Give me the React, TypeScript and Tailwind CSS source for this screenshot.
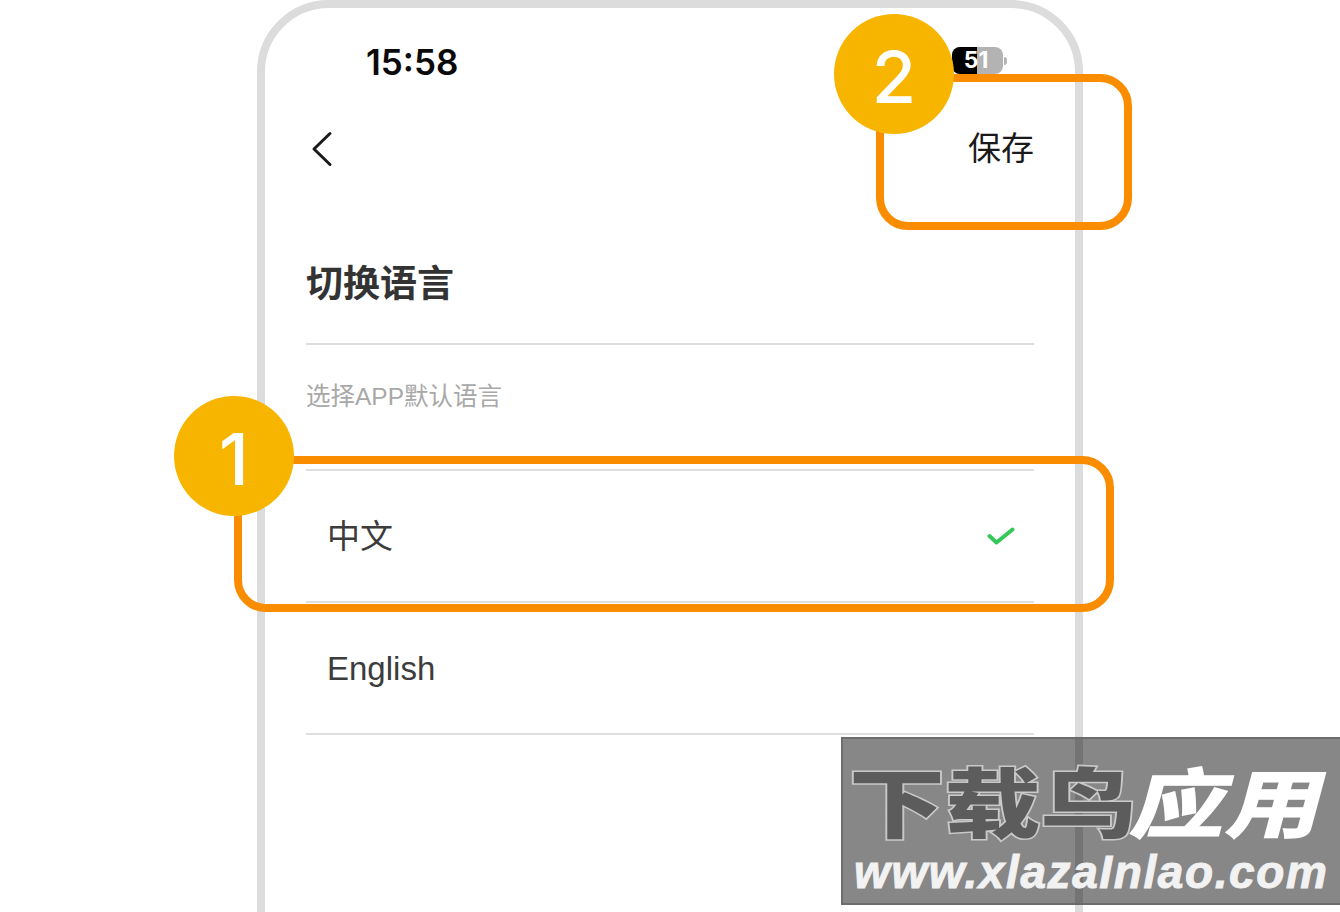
const sans = "font-['Inter','Noto_Sans_CJK_SC',sans-serif]"

function NumberBadge({ value, className }: { value: string; className: string }) {
  return (
    <div
      className={`absolute flex h-[120px] w-[120px] items-center justify-center rounded-full bg-[#f8b500] pt-[5px] text-[72px] font-medium leading-none text-white ${className}`}
    >
      {value}
    </div>
  )
}

function Row({ label, checked }: { label: string; checked?: boolean }) {
  return (
    <div className="flex h-[132px] items-center justify-between border-b-2 border-[#dfdfdf] pl-[21px] pr-[19px]">
      <span className="font-['Liberation_Sans','Noto_Sans_CJK_SC',sans-serif] text-[33px] leading-none text-[#3c3c3c]">{label}</span>
      {checked && (
        <svg width="28" height="20" viewBox="0 0 28 20" fill="none">
          <path d="M2.5 10l7 6.5L25.5 3.5" stroke="#34c759" strokeWidth="4" strokeLinecap="round" strokeLinejoin="round" />
        </svg>
      )}
    </div>
  )
}

function Watermark() {
  return (
    <div className="absolute left-[841px] top-[737px] flex h-[168px] w-[499px] flex-col border-2 border-r-0 border-[#666666]/80 bg-black/[0.47] pl-[6px] font-['Noto_Sans_CJK_SC',sans-serif]">
      <div className="mt-[22px] flex h-[76px] w-fit origin-left scale-x-[1.26] items-center whitespace-nowrap text-[76px] font-black leading-none">
        <span className="text-[#5c5c5c] [-webkit-text-stroke:3px_#c9c9c9] [paint-order:stroke_fill]">下载鸟</span>
        <span className="-skew-x-12 text-white">应用</span>
      </div>
      <div className="mt-[11px] whitespace-nowrap pl-[5px] font-['Liberation_Sans',sans-serif] text-[46px] font-bold italic leading-[48px] tracking-[1.6px] text-[#f2f2f2] [-webkit-text-stroke:1px_#f2f2f2]">
        www.xlazaInlao.com
      </div>
    </div>
  )
}

export default function App() {
  return (
    <div className={`relative h-[912px] w-[1340px] overflow-hidden bg-white ${sans}`}>
      <div className="ml-[257px] h-[1100px] w-[826px] rounded-[72px] border-8 border-[#dcdcdc] bg-white">
        {/* status bar */}
        <div className="flex h-[102px] items-start justify-between pl-[101px] pr-[68px] pt-[36px]">
          <span className="text-[35px] font-semibold leading-[36px] text-[#0a0a0a]">15:58</span>
          <div className="mt-[3px] flex items-center">
            <div className="relative flex h-[27px] w-[51px] items-center justify-center overflow-hidden rounded-[8px] bg-[#b3b3b3] pr-[3px]">
              <div className="absolute inset-y-0 left-0 w-[25px] bg-black" />
              <span className="relative text-[23px] font-bold leading-none text-white">51</span>
            </div>
            <div className="ml-[1px] h-[8px] w-[3px] rounded-r-full bg-[#b3b3b3]" />
          </div>
        </div>

        {/* nav */}
        <div className="flex h-[76px] items-center justify-between pl-[46px] pr-[41px] pt-[1px]">
          <svg width="24" height="36" viewBox="0 0 24 36" fill="none">
            <path d="M19 2.5L3 18l16 15.5" stroke="#1a1a1a" strokeWidth="3" strokeLinecap="round" strokeLinejoin="round" />
          </svg>
          <span className="text-[33px] leading-none text-[#1a1a1a]">保存</span>
        </div>

        <div className="px-[41px]">
          <div className="h-[159px] border-b-2 border-[#dfdfdf] pt-[78px]">
            <h1 className="text-[37px] font-bold leading-[40px] text-[#333333]">切换语言</h1>
          </div>
          <div className="h-[124px] pt-[38px] font-['Liberation_Sans','Noto_Sans_CJK_SC',sans-serif] text-[24.5px] leading-[28px] text-[#a8a8a8]">选择APP默认语言</div>
          <div className="border-t-2 border-[#dfdfdf]">
            <Row label="中文" checked />
            <Row label="English" />
          </div>
        </div>
      </div>

      {/* callouts */}
      <div className="absolute left-[234px] top-[456px] h-[156px] w-[880px] rounded-[32px] border-8 border-[#fa8c00]" />
      <div className="absolute left-[876px] top-[74px] h-[156px] w-[256px] rounded-[32px] border-8 border-[#fa8c00]" />
      <NumberBadge value="1" className="left-[174px] top-[396px]" />
      <NumberBadge value="2" className="left-[834px] top-[14px]" />
      <Watermark />
    </div>
  )
}
